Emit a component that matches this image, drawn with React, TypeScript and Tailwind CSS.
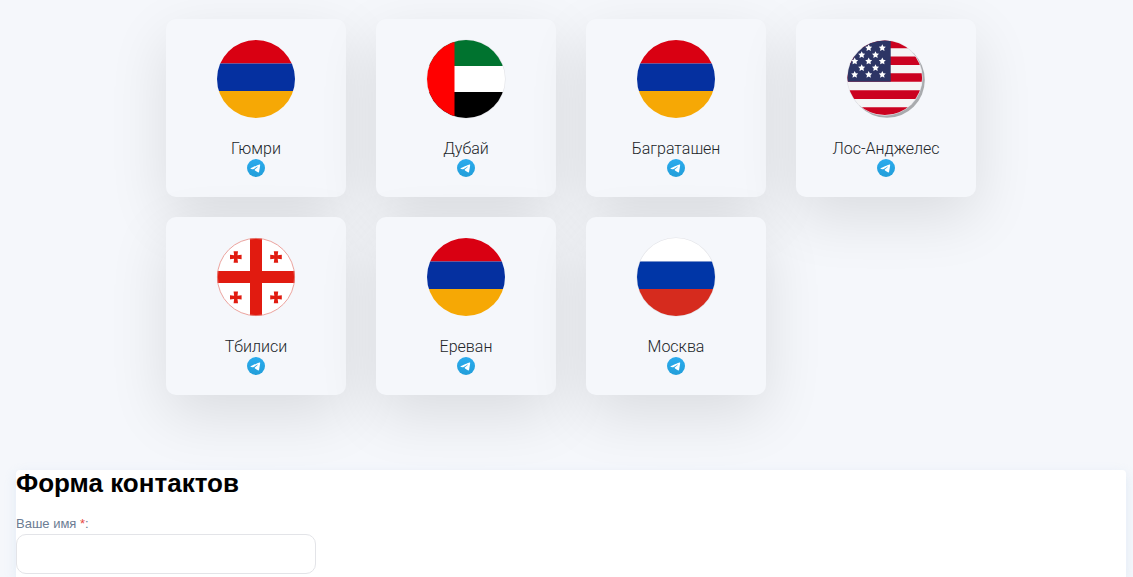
import React, { useId } from "react";

type FlagName = "armenia" | "uae" | "usa" | "georgia" | "russia";

const starPoints = (cx: number, cy: number, r: number) =>
  Array.from({ length: 10 }, (_, i) => {
    const radius = i % 2 === 0 ? r : r * 0.5;
    const angle = (Math.PI / 5) * i - Math.PI / 2;
    return `${(cx + radius * Math.cos(angle)).toFixed(2)},${(cy + radius * Math.sin(angle)).toFixed(2)}`;
  }).join(" ");

const STARS = [
  [22.7, 9], [36.3, 9],
  [15.7, 15.9], [29.5, 15.9],
  [8.7, 22.3], [22.7, 22.3], [36.3, 22.3],
  [15.7, 29], [29.5, 29],
  [8.7, 35.7], [22.7, 35.7], [36.3, 35.7],
];

function Stripes({ colors }: { colors: [string, string, string] }) {
  return (
    <>
      <rect width="80" height="24.5" fill={colors[0]} />
      <rect y="24.5" width="80" height="27.5" fill={colors[1]} />
      <rect y="52" width="80" height="28" fill={colors[2]} />
    </>
  );
}

function Flag({ name }: { name: FlagName }) {
  const id = useId();
  const usa = name === "usa";
  const cx = usa ? 38.8 : 40;
  const cy = usa ? 38.8 : 40;
  const r = usa ? 37.3 : 39;
  return (
    <svg viewBox="0 0 80 80" className="size-20" aria-hidden="true">
      <clipPath id={id}>
        <circle cx={cx} cy={cy} r={r} />
      </clipPath>
      {usa && (
        <>
          <circle cx="41" cy="41" r="37.8" fill="#a9abae" />
          <circle cx="38.8" cy="38.8" r="37.9" fill="#e0e1e7" />
        </>
      )}
      {(name === "russia" || name === "uae") && <circle cx="40" cy="40" r="39.6" fill="#e2e3e7" />}
      <g clipPath={`url(#${id})`}>
        {name === "armenia" && <Stripes colors={["#d90012", "#0530a0", "#f6a805"]} />}
        {name === "russia" && <Stripes colors={["#ffffff", "#0036a7", "#d62b1e"]} />}
        {name === "uae" && (
          <>
            <rect width="80" height="27" fill="#00732f" />
            <rect y="27" width="80" height="26" fill="#fff" />
            <rect y="53" width="80" height="27" fill="#000" />
            <rect width="28.5" height="80" fill="#ff0000" />
          </>
        )}
        {usa && (
          <>
            <rect width="80" height="80" fill="#f5f4f5" />
            <path d="M0 0h80v9.3H0zM0 17.5h80V26H0zM0 34.3h80v8.4H0zM0 51.3h80V60H0zM0 68.3h80V80H0z" fill="#cb0220" />
            <rect width="44.7" height="42.7" fill="#2d3565" />
            {STARS.map(([x, y]) => (
              <polygon key={`${x}-${y}`} points={starPoints(x, y, 3.7)} fill="#fff" />
            ))}
          </>
        )}
        {name === "georgia" && (
          <>
            <rect width="80" height="80" fill="#fff" />
            <path d="M34 0h12v34h34v12H46v34H34V46H0V34h34z" fill="#e11b10" />
            {[[19.8, 20], [60, 20], [19.8, 60.4], [60, 60.4]].map(([x, y]) => (
              <path
                key={`${x}-${y}`}
                transform={`translate(${x} ${y})`}
                d="M-2.2-5.8h4.4L1.7-1.7l4.1-.5v4.4l-4.1-.5.5 4.1h-4.4l.5-4.1-4.1.5v-4.4l4.1.5z"
                fill="#e11b10"
              />
            ))}
          </>
        )}
      </g>
      {name === "georgia" && <circle cx="40" cy="40" r="38.6" fill="none" stroke="#e58a84" strokeWidth="0.8" />}
    </svg>
  );
}

function TelegramIcon() {
  const id = useId();
  return (
    <svg viewBox="0 0 24 24" className="block size-[18px]" aria-hidden="true">
      <linearGradient id={id} x1="0" y1="0" x2="0" y2="1">
        <stop offset="0" stopColor="#2aabee" />
        <stop offset="1" stopColor="#229ed9" />
      </linearGradient>
      <circle cx="12" cy="12" r="12" fill={`url(#${id})`} />
      <path
        fill="#fff"
        d="M16.906 7.224c.1-.002.321.023.465.14a.506.506 0 0 1 .171.325c.016.093.036.306.02.472-.18 1.898-.962 6.502-1.36 8.627-.168.9-.499 1.201-.82 1.23-.696.065-1.225-.46-1.9-.902-1.056-.693-1.653-1.124-2.678-1.8-1.185-.78-.417-1.21.258-1.91.177-.184 3.247-2.977 3.307-3.23.007-.032.014-.15-.056-.212s-.174-.041-.249-.024c-.106.024-1.793 1.14-5.061 3.345-.48.33-.913.49-1.302.48-.428-.008-1.252-.241-1.865-.44-.752-.245-1.349-.374-1.297-.789.027-.216.325-.437.893-.663 3.498-1.524 5.83-2.529 6.998-3.014 3.332-1.386 4.025-1.627 4.476-1.635z"
      />
    </svg>
  );
}

const CITIES: { city: string; flag: FlagName }[] = [
  { city: "Гюмри", flag: "armenia" },
  { city: "Дубай", flag: "uae" },
  { city: "Баграташен", flag: "armenia" },
  { city: "Лос-Анджелес", flag: "usa" },
  { city: "Тбилиси", flag: "georgia" },
  { city: "Ереван", flag: "armenia" },
  { city: "Москва", flag: "russia" },
];

function CityCard({ city, flag }: { city: string; flag: FlagName }) {
  return (
    <li className="flex w-[180px] flex-col items-center rounded-[10px] bg-[#f5f7fb] py-5 shadow-[0_20px_60px_rgba(0,0,0,0.11)]">
      <Flag name={flag} />
      <span className="mt-5 text-base leading-5 font-light text-[#212529]">{city}</span>
      <a href="#telegram" aria-label={`Telegram: ${city}`}>
        <TelegramIcon />
      </a>
    </li>
  );
}

export default function App() {
  return (
    <div className="flex min-h-screen flex-col overflow-x-hidden bg-[#f5f7fb] pt-[19px] pr-[7px] pl-4 font-['Roboto',sans-serif]">
      <ul className="mx-auto flex w-full max-w-[810px] flex-wrap gap-x-[30px] gap-y-5">
        {CITIES.map((item) => (
          <CityCard key={item.city} {...item} />
        ))}
      </ul>
      <form className="mt-[75px] flex-1 rounded-t bg-white font-['Liberation_Sans',Arial,sans-serif] shadow-[0_4px_12px_rgba(200,220,240,0.45)]">
        <h2 className="text-[26px] leading-[26px] font-bold text-black">Форма контактов</h2>
        <label htmlFor="name" className="mt-5 block text-[13px] leading-4 text-[#6b7c93]">
          Ваше имя <span className="text-[#e8483f]">*</span>:
        </label>
        <input
          id="name"
          type="text"
          required
          className="mt-0.5 block h-10 w-[300px] max-w-full rounded-[10px] border border-[#e3e4e8] bg-white px-3 text-sm outline-none"
        />
      </form>
    </div>
  );
}
